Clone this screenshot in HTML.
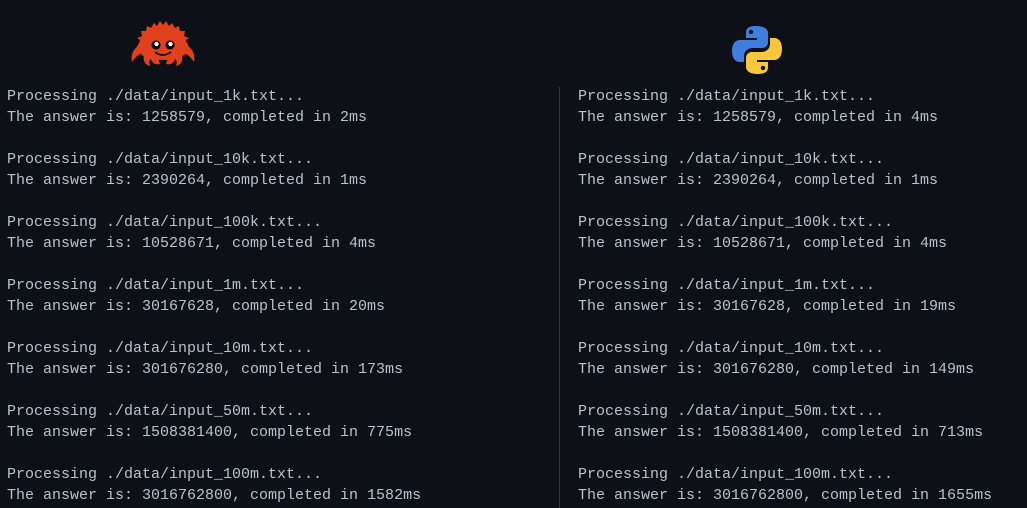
<!DOCTYPE html>
<html><head><meta charset="utf-8"><style>
html,body{margin:0;padding:0;background:#0d1117;width:1027px;height:508px;overflow:hidden}
.col{position:absolute;font-family:"Liberation Mono",monospace;font-size:15px;line-height:21px;color:#b8c2cc;white-space:pre}
.div{position:absolute;left:559px;top:87px;width:1px;height:421px;background:#30363d}
svg{position:absolute}
</style></head><body>
<svg style="left:128px;top:18px" width="70" height="52" viewBox="0 0 70 52">
<g fill="#e0401c">
<path d="M10 30 L12 22 L9 20 L14 18 L13 13 L18 13 L19 8 L23 10 L26 5 L29 8 L32 3 L35 7 L38 3 L41 8 L44 5 L47 10 L51 8 L52 13 L57 13 L56 18 L61 20 L58 22 L60 30 Z"/>
<ellipse cx="35" cy="30" rx="26" ry="12"/>
<path d="M10 28 Q2 34 4 44 Q8 38 12 36 Z"/>
<path d="M60 28 Q68 34 66 44 Q62 38 58 36 Z"/>
<path d="M16 36 Q14 46 22 48 Q20 42 24 40 Z"/>
<path d="M54 36 Q56 46 48 48 Q50 42 46 40 Z"/>
<path d="M22 38 Q24 48 32 46 L30 40 Z"/>
<path d="M48 38 Q46 48 38 46 L40 40 Z"/>
</g>
<path d="M27 34 Q35 40 43 34" stroke="#000" stroke-width="1.5" fill="none"/>
<circle cx="28" cy="27" r="4.5" fill="#000"/><circle cx="28.5" cy="26" r="2.2" fill="#fff"/>
<circle cx="42" cy="27" r="4.5" fill="#000"/><circle cx="42.5" cy="26" r="2.2" fill="#fff"/>
</svg>
<svg style="left:731px;top:24px" width="52" height="52" viewBox="0 0 52 52">
<path fill="#3f7fe0" d="M25 2 C16 2 15 6 15 9 L15 14 L26 14 L26 16 L9 16 C4 16 1 20 1 27 C1 34 4 38 9 38 L13 38 L13 32 C13 27 17 24 22 24 L31 24 C35 24 37 21 37 18 L37 9 C37 5 33 2 25 2 Z"/>
<circle cx="20" cy="8" r="2.2" fill="#0d1117"/>
<path fill="#f8c73c" d="M27 50 C36 50 37 46 37 43 L37 38 L26 38 L26 36 L43 36 C48 36 51 32 51 25 C51 18 48 14 43 14 L39 14 L39 20 C39 25 35 28 30 28 L21 28 C17 28 15 31 15 34 L15 43 C15 47 19 50 27 50 Z"/>
<circle cx="32" cy="44" r="2.2" fill="#0d1117"/>
</svg>
<div class="div"></div>
<div class="col" style="left:7px;top:86px">Processing ./data/input_1k.txt...
The answer is: 1258579, completed in 2ms

Processing ./data/input_10k.txt...
The answer is: 2390264, completed in 1ms

Processing ./data/input_100k.txt...
The answer is: 10528671, completed in 4ms

Processing ./data/input_1m.txt...
The answer is: 30167628, completed in 20ms

Processing ./data/input_10m.txt...
The answer is: 301676280, completed in 173ms

Processing ./data/input_50m.txt...
The answer is: 1508381400, completed in 775ms

Processing ./data/input_100m.txt...
The answer is: 3016762800, completed in 1582ms</div>
<div class="col" style="left:578px;top:86px">Processing ./data/input_1k.txt...
The answer is: 1258579, completed in 4ms

Processing ./data/input_10k.txt...
The answer is: 2390264, completed in 1ms

Processing ./data/input_100k.txt...
The answer is: 10528671, completed in 4ms

Processing ./data/input_1m.txt...
The answer is: 30167628, completed in 19ms

Processing ./data/input_10m.txt...
The answer is: 301676280, completed in 149ms

Processing ./data/input_50m.txt...
The answer is: 1508381400, completed in 713ms

Processing ./data/input_100m.txt...
The answer is: 3016762800, completed in 1655ms</div>
</body></html>
